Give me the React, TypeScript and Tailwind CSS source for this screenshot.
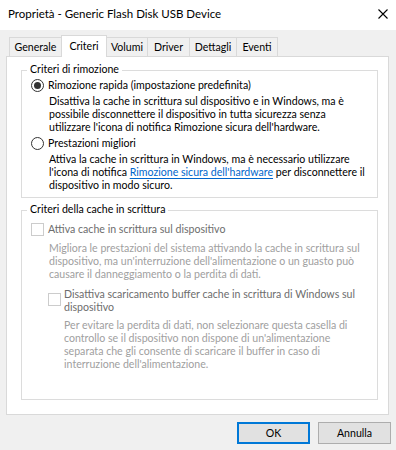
import React from "react";

function Radio({ checked }: { checked?: boolean }) {
  return (
    <div className="w-[13px] h-[13px] shrink-0 rounded-full border border-[#333333] bg-white flex items-center justify-center">
      {checked && <div className="w-[7px] h-[7px] rounded-full bg-[#333333]" />}
    </div>
  );
}

function Check() {
  return <div className="w-[13px] h-[13px] shrink-0 border border-[#cccccc] bg-white" />;
}

function Lines({ lines, className }: { lines: React.ReactNode[]; className?: string }) {
  return (
    <div className={className}>
      {lines.map((l, i) => (
        <div key={i} className="h-[13px] whitespace-nowrap">
          {l}
        </div>
      ))}
    </div>
  );
}

function Tab({ label, w, selected }: { label: string; w: string; selected?: boolean }) {
  if (selected) {
    return (
      <div
        className={`${w} h-[22px] -mb-px -ml-px relative z-10 bg-white border border-b-0 border-[#d9d9d9] flex items-center justify-center`}
      >
        {label}
      </div>
    );
  }
  return (
    <div
      className={`${w} h-[19px] -ml-px first:ml-0 bg-[#f0f0f0] border border-b-0 border-[#d9d9d9] flex items-center justify-center`}
    >
      {label}
    </div>
  );
}

export default function App() {
  return (
    <div className="w-[396px] h-[450px] bg-[#f0f0f0] flex flex-col font-['Lato',sans-serif] text-[10.6px] leading-[13px] text-black">
      {/* Title bar */}
      <div className="h-[30px] shrink-0 bg-white flex justify-between pl-[8px] pr-[8px]">
        <span className="mt-[7px] text-[11.5px] leading-[14px]">Proprietà - Generic Flash Disk USB Device</span>
        <svg className="mt-[9px]" width="10" height="10" viewBox="0 0 10 10">
          <path d="M0.5 0.5 L9.5 9.5 M9.5 0.5 L0.5 9.5" stroke="#000" strokeWidth="1.1" fill="none" />
        </svg>
      </div>

      {/* Tabs */}
      <div className="mt-[5px] h-[21px] shrink-0 flex items-end pl-[9px]">
        <Tab label="Generale" w="w-[53px]" />
        <Tab label="Criteri" w="w-[46px]" selected />
        <Tab label="Volumi" w="w-[42px]" />
        <Tab label="Driver" w="w-[43px]" />
        <Tab label="Dettagli" w="w-[48px]" />
        <Tab label="Eventi" w="w-[42px]" />
      </div>

      {/* Panel */}
      <div className="ml-[6px] w-[383px] h-[359px] shrink-0 border border-[#d9d9d9] bg-white pl-[14px] pt-[13px]">
        {/* Group 1 */}
        <div className="relative w-[357px] h-[128px] border border-[#dcdcdc] pt-[8px] pl-[9px]">
          <div className="absolute left-[5px] -top-[8px] bg-white px-[3px] h-[13px] whitespace-nowrap">Criteri di rimozione</div>
          <div className="flex items-center gap-[4px] h-[13px]">
            <Radio checked />
            <span className="whitespace-nowrap">Rimozione rapida (impostazione predefinita)</span>
          </div>
          <Lines
            className="mt-[3px] ml-[18px]"
            lines={[
              "Disattiva la cache in scrittura sul dispositivo e in Windows, ma è",
              "possibile disconnettere il dispositivo in tutta sicurezza senza",
              "utilizzare l'icona di notifica Rimozione sicura dell'hardware.",
            ]}
          />
          <div className="mt-[3px] flex items-center gap-[4px] h-[13px]">
            <Radio />
            <span className="whitespace-nowrap">Prestazioni migliori</span>
          </div>
          <Lines
            className="mt-[3px] ml-[18px]"
            lines={[
              "Attiva la cache in scrittura in Windows, ma è necessario utilizzare",
              <>
                l'icona di notifica{" "}
                <span className="text-[#0066cc] underline underline-offset-[2px]">Rimozione sicura dell'hardware</span> per
                disconnettere il
              </>,
              "dispositivo in modo sicuro.",
            ]}
          />
        </div>

        {/* Group 2 */}
        <div className="relative mt-[12px] w-[357px] h-[190px] border border-[#dcdcdc] pt-[12px] pl-[9px]">
          <div className="absolute left-[5px] -top-[8px] bg-white px-[3px] h-[13px] whitespace-nowrap">
            Criteri della cache in scrittura
          </div>
          <div className="flex items-center gap-[4px] h-[13px]">
            <Check />
            <span className="whitespace-nowrap text-[#6d6d6d]">Attiva cache in scrittura sul dispositivo</span>
          </div>
          <Lines
            className="mt-[6px] ml-[18px] text-[#a0a0a0]"
            lines={[
              "Migliora le prestazioni del sistema attivando la cache in scrittura sul",
              "dispositivo, ma un'interruzione dell'alimentazione o un guasto può",
              "causare il danneggiamento o la perdita di dati.",
            ]}
          />
          <div className="mt-[7px] ml-[17px] flex items-start gap-[3px]">
            <div className="mt-[5px]">
              <Check />
            </div>
            <Lines
              className="text-[#6d6d6d]"
              lines={["Disattiva scaricamento buffer cache in scrittura di Windows sul", "dispositivo"]}
            />
          </div>
          <Lines
            className="mt-[5px] ml-[33px] text-[#a0a0a0]"
            lines={[
              "Per evitare la perdita di dati, non selezionare questa casella di",
              "controllo se il dispositivo non dispone di un'alimentazione",
              "separata che gli consente di scaricare il buffer in caso di",
              "interruzione dell'alimentazione.",
            ]}
          />
        </div>
      </div>

      {/* Buttons */}
      <div className="mt-[7px] flex justify-end gap-[8px] pr-[5px]">
        <button className="w-[73px] h-[22px] border-2 border-[#0078d7] bg-[#e1e1e1] flex items-center justify-center">
          OK
        </button>
        <button className="w-[73px] h-[22px] border border-[#adadad] bg-[#e1e1e1] flex items-center justify-center">
          Annulla
        </button>
      </div>
    </div>
  );
}
